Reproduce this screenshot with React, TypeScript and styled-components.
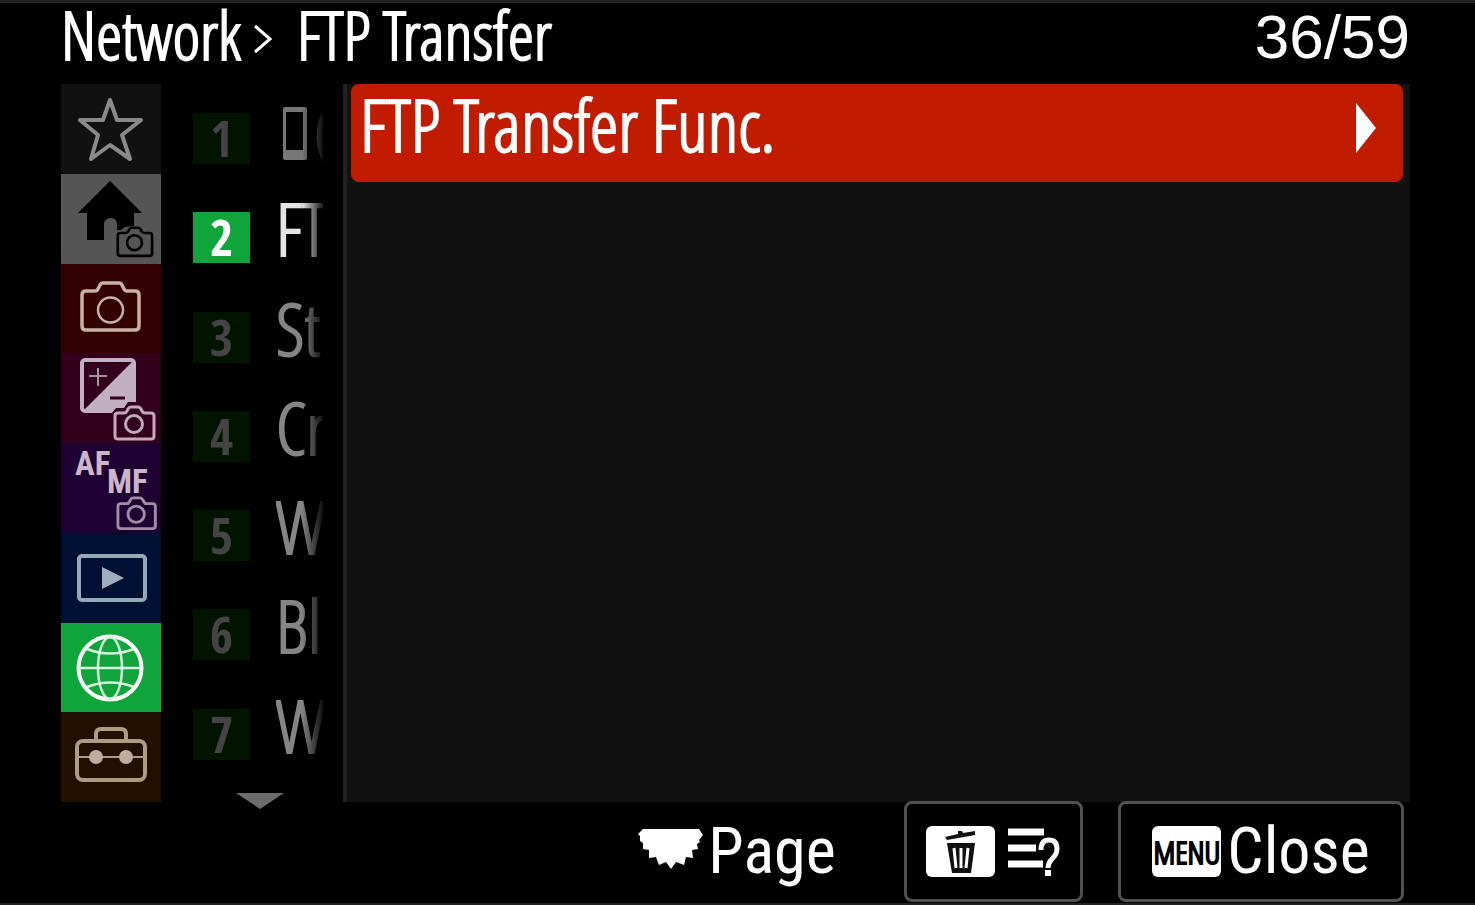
import React from "react";
import styled, { createGlobalStyle, css } from "styled-components";

const light = `"Open Sans Condensed Light", "Open Sans Condensed", "Roboto Condensed", "Liberation Sans", sans-serif`;
const bold = `"Open Sans Condensed", "Roboto Condensed", "Open Sans", sans-serif`;

const GlobalStyle = createGlobalStyle`
  *, *::before, *::after { box-sizing: border-box; }
  body { margin: 0; background: #000; color: #fff; font-family: ${light}; font-weight: 300; }
  button { font: inherit; color: inherit; border: 0; margin: 0; padding: 0; background: none; cursor: pointer; }
  svg { display: block; flex: none; }
`;

const Screen = styled.div`
  display: flex;
  flex-direction: column;
  min-height: 100vh;
  padding: 0 65px 0 61px;
  border-top: 3px solid #222;
  border-bottom: 2px solid #222;
  background: #000;
`;

const Header = styled.header`
  display: flex;
  justify-content: space-between;
  align-items: flex-start;
  height: 81px;
  white-space: nowrap;
`;

const thicken = css`
  -webkit-text-stroke: 2px currentColor;
`;

const Breadcrumb = styled.h1`
  display: flex;
  align-items: center;
  margin: 0;
  font-size: 66px;
  font-weight: 300;
  line-height: 62px;
  ${thicken}
`;

const Separator = styled.svg`
  margin: 10px 24px 0 12px;
`;

const Counter = styled.span`
  font-family: "Liberation Sans", Arial, sans-serif;
  font-size: 62px;
  line-height: 68px;
`;

const Main = styled.main`
  display: flex;
  flex: 1;
`;

const Tabs = styled.nav`
  display: flex;
  flex-direction: column;
  width: 100px;
`;

const Tab = styled.button<{ $bg: string }>`
  display: flex;
  flex: 1;
  align-items: center;
  justify-content: center;
  background: ${(p) => p.$bg};

  svg {
    margin: -1px 0;
  }
`;

const Pages = styled.nav`
  display: flex;
  flex-direction: column;
  width: 182px;
  padding: 5px 20px 0 32px;
  margin-bottom: -7px;
`;

const PageRow = styled.button`
  display: flex;
  flex: 1;
  align-items: flex-start;
  gap: 26px;
  text-align: left;
`;

const Badge = styled.span<{ $active?: boolean }>`
  width: 57px;
  height: 51px;
  margin-top: 24px;
  flex: none;
  font: 700 50px/51px ${bold};
  text-align: center;
  background: ${(p) => (p.$active ? "#10a53a" : "#001400")};
  color: ${(p) => (p.$active ? "#fff" : "#444")};
`;

const PageName = styled.span<{ $active?: boolean }>`
  display: flex;
  width: 47px;
  height: 80px;
  overflow: hidden;
  font-size: 72px;
  line-height: 80px;
  white-space: nowrap;
  color: ${(p) => (p.$active ? "#e4e4e4" : "#858585")};
  mask-image: linear-gradient(90deg, #000 55%, transparent 105%);
  ${thicken}
`;

const MoreArrow = styled.svg`
  align-self: center;
  margin: 9px 0 0 4px;
`;

const Panel = styled.section`
  flex: 1;
  padding: 0 7px 0 4px;
  border-left: 4px solid #222;
  background: #111;
`;

const MenuItem = styled.button`
  display: flex;
  align-items: flex-start;
  justify-content: space-between;
  width: 100%;
  height: 98px;
  padding: 0 27px 0 9px;
  border-radius: 8px;
  background: #c21c00;
  font-size: 72px;
  line-height: 80px;
  white-space: nowrap;
  ${thicken}

  svg {
    margin-top: 19px;
  }
`;

const Footer = styled.footer`
  display: flex;
  justify-content: flex-end;
  height: 102px;
  margin-top: -1px;
  padding-right: 6px;
  font-family: "Roboto Condensed", "Liberation Sans", sans-serif;
  font-weight: 400;
  font-size: 64px;
  line-height: 76px;
`;

const boxed = css`
  border: 3px solid #505050;
  border-radius: 8px;
`;

const FooterAction = styled.button<{ $boxed?: boolean; $width: number; $gap: number; $after: number }>`
  display: flex;
  align-items: center;
  justify-content: center;
  gap: ${(p) => p.$gap}px;
  width: ${(p) => p.$width}px;
  height: 101px;
  margin-right: ${(p) => p.$after}px;
  ${(p) => p.$boxed && boxed}
`;

const KeyCap = styled.span`
  display: flex;
  align-items: center;
  justify-content: center;
  width: 69px;
  height: 51px;
  border-radius: 6px;
  background: #fff;
  color: #000;
  font-family: ${light};
  font-size: 32px;
  font-weight: 300;
  ${thicken}
`;

const cameraPath = "M7 12h9q2 0 3-2l2-4q1-2 3-2h16q2 0 3 2l2 4q1 2 3 2h8q4 0 4 4v31q0 4-4 4H7q-4 0-4-4V16q0-4 4-4z";

const SmallCamera = ({ x, y, color, scale = 1 }: { x: number; y: number; color: string; scale?: number }) => (
  <g transform={`translate(${x} ${y}) scale(${scale})`} fill="none" stroke={color} strokeWidth="3">
    <path d="M5 8h6q2 0 3-2l1-2q1-2 3-2h7q2 0 3 2l1 2q1 2 3 2h6q3 0 3 3v20q0 3-3 3H5q-3 0-3-3V11q0-3 3-3z" />
    <circle cx="21" cy="19" r="8.500" />
  </g>
);

const Star = () => (
  <svg width="100" height="90" viewBox="0 0 100 90" fill="none" stroke="#8a8a8a" strokeWidth="4" strokeLinejoin="round">
    <path d="M49 16l7 20h24L61 51l8 24-20-14-19 14 7-24L19 36h23z" />
  </svg>
);

const Home = () => (
  <svg width="100" height="90" viewBox="0 0 100 90">
    <path fill="#000" d="M49 7l32 32h-8v13l-9 1-4 3h-4V49q-1-5-7-5-6 1-6 6v16H26V39h-9z" />
    <SmallCamera x={55} y={52} scale={0.88} color="#000" />
  </svg>
);

const Camera = () => (
  <svg width="100" height="90" viewBox="-18 -16 100 90" fill="none" stroke="#c7b2a8">
    <path d={cameraPath} strokeWidth="3.500" />
    <circle cx="31.500" cy="31" r="12.500" strokeWidth="2.500" />
  </svg>
);

const Exposure = () => (
  <svg width="100" height="90" viewBox="0 0 100 90">
    <rect x="21" y="7" width="52" height="51" rx="3" fill="none" stroke="#c2b0c2" strokeWidth="4" />
    <path d="M22 58L73 7v51z" fill="#c2b0c2" />
    <path d="M37 15v18M28 23h18" stroke="#a593a5" strokeWidth="2" />
    <path d="M49 45h15" stroke="#32001b" strokeWidth="3" />
    <path d="M50 90V61l5-6h8l4-6h13l7 7h13v34z" fill="#32001b" />
    <SmallCamera x={52} y={52} color="#c2a8b8" />
  </svg>
);

const Focus = () => (
  <svg width="100" height="90" viewBox="0 0 100 90">
    <g fill="#cbb5cb" fontFamily="Roboto Condensed, Liberation Sans, sans-serif" fontWeight="700" fontSize="33">
      <text x="14" y="32">AF</text>
      <text x="46" y="50">MF</text>
    </g>
    <SmallCamera x={55} y={53} scale={0.96} color="#a58ca5" />
  </svg>
);

const Playback = () => (
  <svg width="100" height="90" viewBox="0 0 100 90">
    <rect x="18" y="23" width="66" height="44" rx="3" fill="none" stroke="#92aab5" strokeWidth="4" />
    <path d="M41 34v22l22-11z" fill="#9bb0bd" />
  </svg>
);

const Globe = () => (
  <svg width="100" height="90" viewBox="0 0 100 90" fill="none" stroke="#d6f5dc" strokeWidth="2.500">
    <circle cx="49" cy="46" r="31.500" stroke="#fff" strokeWidth="4" />
    <ellipse cx="49" cy="46" rx="12" ry="31" />
    <path d="M18 46h62M26 27q23 9 47 0M26 65q23-9 47 0" />
  </svg>
);

const Toolbox = () => (
  <svg width="100" height="90" viewBox="0 0 100 90" fill="none" stroke="#ad9c80" strokeWidth="4">
    <rect x="16" y="29" width="68" height="39" rx="6" />
    <path d="M35 29v-7q0-5 5-5h20q5 0 5 5v7" />
    <path d="M17 45h66" strokeWidth="2" />
    <g fill="#c2ad9c" stroke="none">
      <circle cx="35" cy="45" r="7" />
      <circle cx="65" cy="45" r="7" />
    </g>
  </svg>
);

const Phone = () => (
  <svg width="38" height="80" viewBox="0 0 38 80">
    <path fill="#777" fillRule="evenodd" d="M9 18h20q2 0 2 2v49q0 2-2 2H9q-2 0-2-2V20q0-2 2-2zm1 5v38h17V23z" />
  </svg>
);

const Dial = styled.svg`
  margin-bottom: 6px;
`;

const Trash = () => (
  <svg width="36" height="46" viewBox="0 0 36 46">
    <path fill="#111" d="M2 8l13-3V2h4l1 2 12-2v4L4 11z" />
    <path fill="#111" d="M4 14h28l-4 30H9z" />
    <path d="M11 19l2 20M18 19v20M25 19l-2 20" stroke="#fff" strokeWidth="3" />
  </svg>
);

const HelpList = () => (
  <svg width="54" height="50" viewBox="0 0 54 50" fill="none" stroke="#fff">
    <path d="M1 5h36M1 21h28M1 37h35" strokeWidth="7" />
    <path d="M34 23q0-10 8-10 8 0 8 9 0 5-5 10-4 4-4 9" strokeWidth="5" />
    <path d="M38 46h6" strokeWidth="6" />
  </svg>
);

const tabs = [
  { name: "My Menu", bg: "#111", icon: <Star /> },
  { name: "Main", bg: "#555", icon: <Home /> },
  { name: "Shooting", bg: "#320000", icon: <Camera /> },
  { name: "Exposure/Color", bg: "#32001b", icon: <Exposure /> },
  { name: "Focus", bg: "#1f0032", icon: <Focus /> },
  { name: "Playback", bg: "#001032", icon: <Playback /> },
  { name: "Network", bg: "#10a53a", icon: <Globe /> },
  { name: "Setup", bg: "#230f00", icon: <Toolbox /> },
];

const pages: React.ReactNode[] = [<><Phone />(</>, "FT", "St", "Cr", "W", "Bl", "W"];

export default function App() {
  return (
    <>
      <GlobalStyle />
      <Screen>
        <Header>
          <Breadcrumb>
            <span>Network</span>
            <Separator width="20" height="32" viewBox="0 0 20 32" fill="none" stroke="#fff" strokeWidth="3">
              <path d="M2 3l15 13L2 29" />
            </Separator>
            <span>FTP Transfer</span>
          </Breadcrumb>
          <Counter>36/59</Counter>
        </Header>
        <Main>
          <Tabs>
            {tabs.map((t) => (
              <Tab key={t.name} $bg={t.bg} aria-label={t.name}>{t.icon}</Tab>
            ))}
          </Tabs>
          <Pages>
            {pages.map((name, i) => (
              <PageRow key={i}>
                <Badge $active={i === 1}>{i + 1}</Badge>
                <PageName $active={i === 1}>{name}</PageName>
              </PageRow>
            ))}
            <MoreArrow width="48" height="16" viewBox="0 0 48 16">
              <path d="M0 0h48L24 16z" fill="#6c6c6c" />
            </MoreArrow>
          </Pages>
          <Panel>
            <MenuItem>
              <span>FTP Transfer Func.</span>
              <svg width="20" height="50" viewBox="0 0 20 50">
                <path d="M0 0l20 25L0 50z" fill="#fff" />
              </svg>
            </MenuItem>
          </Panel>
        </Main>
        <Footer>
          <FooterAction $width={196} $gap={4} $after={69}>
            <Dial width="66" height="42" viewBox="0 0 66 42" fill="#fff">
              <path d="M5 1h56l4 6-4 5 1 2-3 2 1 5-6 1 1 8-7-1-2 8-8-3-5 7-5-7-7 3-3-8-7 1V22l-6-1V15l-3-2V8L0 6z" />
            </Dial>
            Page
          </FooterAction>
          <FooterAction $boxed $width={179} $gap={12} $after={35} aria-label="Help">
            <KeyCap><Trash /></KeyCap>
            <HelpList />
          </FooterAction>
          <FooterAction $boxed $width={286} $gap={6} $after={0}>
            <KeyCap>MENU</KeyCap>
            Close
          </FooterAction>
        </Footer>
      </Screen>
    </>
  );
}
